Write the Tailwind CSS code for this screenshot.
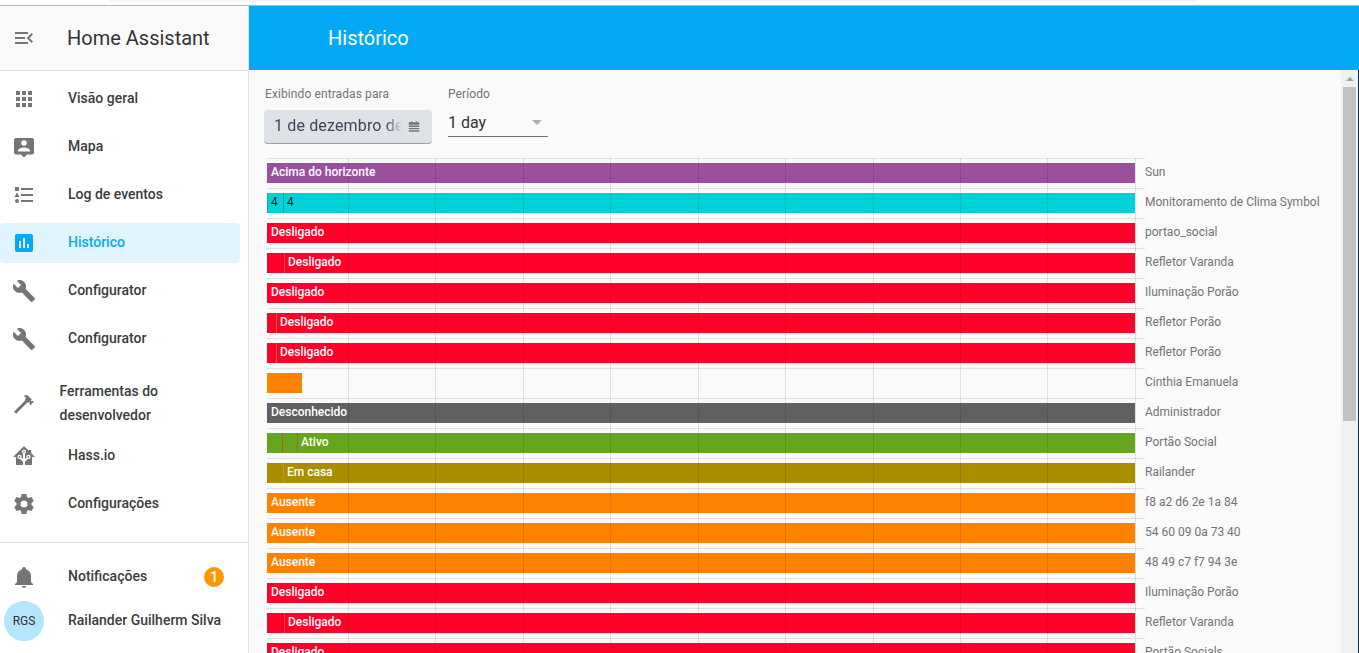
<!DOCTYPE html>
<html lang="en">
<head>
    <meta charset="UTF-8">
    <title>Histórico - Home Assistant</title>
    <script src="https://cdn.jsdelivr.net/npm/@tailwindcss/browser@4"></script>
</head>
<body class="h-[653px] w-[1359px] overflow-hidden bg-white font-['Roboto',sans-serif] flex flex-col">

    <!-- browser strip -->
    <div class="h-[6px] shrink-0 bg-white flex flex-col">
        <div class="h-[2px] ml-[110px] w-[1085px] bg-[#f5f5f5]"></div>
        <div class="mt-auto h-px flex">
            <div class="w-[249px] bg-[#b5b5b5]"></div>
            <div class="flex-1 bg-[#7cc8ea]"></div>
        </div>
    </div>

    <div class="flex flex-1 min-h-0">
        <!-- sidebar -->
        <aside class="w-[249px] shrink-0 bg-white border-r border-[#e0e0e0] flex flex-col text-[14px] font-medium text-[#3c3c3c]">
            <div class="h-[65px] shrink-0 bg-[#fafafa] border-b border-[#e0e0e0] flex items-center">
                <div class="w-[48px] flex justify-center">
                    <svg class="w-[24px] h-[24px] fill-[#757575]" viewBox="0 0 24 24"><path d="M21,15.61L19.59,17L14.58,12L19.59,7L21,8.39L17.44,12L21,15.61M3,6H16V8H3V6M3,13V11H13V13H3M3,18V16H16V18H3Z"/></svg>
                </div>
                <span class="ml-[19px] text-[20px] font-normal text-[#333]">Home Assistant</span>
            </div>

            <nav class="flex flex-col pt-[4px]">
                <a class="h-[48px] flex items-center">
                    <span class="w-[48px] flex justify-center"><svg class="w-[24px] h-[24px] fill-[#757575]" viewBox="0 0 24 24"><path d="M16,20H20V16H16M16,14H20V10H16M10,8H14V4H10M16,8H20V4H16M10,14H14V10H10M4,14H8V10H4M4,20H8V16H4M10,20H14V16H10M4,8H8V4H4V8Z"/></svg></span>
                    <span class="ml-[20px] mb-[2px]">Visão geral</span>
                </a>
                <a class="h-[48px] flex items-center">
                    <span class="w-[48px] flex justify-center"><svg class="w-[24px] h-[24px] fill-[#757575]" viewBox="0 0 24 24"><path fill-rule="evenodd" d="M20,3H4A2,2 0 0,0 2,5V17.5A2,2 0 0,0 4,19.5H9L12,22.5L15,19.5H20A2,2 0 0,0 22,17.5V5A2,2 0 0,0 20,3ZM12,5.2A2.8,2.8 0 0,1 14.8,8A2.8,2.8 0 0,1 12,10.8A2.8,2.8 0 0,1 9.2,8A2.8,2.8 0 0,1 12,5.2ZM6,16.5V15.5C6,13.5 10,12.4 12,12.4C14,12.4 18,13.5 18,15.5V16.5Z"/></svg></span>
                    <span class="ml-[20px] mb-[2px]">Mapa</span>
                </a>
                <a class="h-[48px] flex items-center">
                    <span class="w-[48px] flex justify-center"><svg class="w-[24px] h-[24px] fill-[#757575]" viewBox="0 0 24 24"><path d="M5,9.5L7.5,14H2.5L5,9.5M3,4H7V8H3V4M5,20A2,2 0 0,0 7,18A2,2 0 0,0 5,16A2,2 0 0,0 3,18A2,2 0 0,0 5,20M9,5V7H21V5H9M9,19H21V17H9V19M9,13H21V11H9V13Z"/></svg></span>
                    <span class="ml-[20px] mb-[2px]">Log de eventos</span>
                </a>
                <a class="h-[40px] my-[4px] w-[240px] flex items-center rounded-[4px] bg-[#e1f4fe] text-[#03a9f4]">
                    <span class="w-[48px] flex justify-center"><svg class="w-[24px] h-[24px] fill-[#03a9f4]" viewBox="0 0 24 24"><path d="M17,17H15V13H17M13,17H11V7H13M9,17H7V10H9M19,3H5C3.89,3 3,3.89 3,5V19A2,2 0 0,0 5,21H19A2,2 0 0,0 21,19V5C21,3.89 20.1,3 19,3Z"/></svg></span>
                    <span class="ml-[20px] mb-[2px]">Histórico</span>
                </a>
                <a class="h-[48px] flex items-center">
                    <span class="w-[48px] flex justify-center"><svg class="w-[24px] h-[24px] fill-[#757575]" viewBox="0 0 24 24"><path d="M22.7,19L13.6,9.9C14.5,7.6 14,4.9 12.1,3C10.1,1 7.1,0.6 4.7,1.7L9,6L6,9L1.6,4.7C0.4,7.1 0.9,10.1 2.9,12.1C4.8,14 7.5,14.5 9.8,13.6L18.9,22.7C19.3,23.1 19.9,23.1 20.3,22.7L22.6,20.4C23.1,20 23.1,19.3 22.7,19Z"/></svg></span>
                    <span class="ml-[20px] mb-[2px]">Configurator</span>
                </a>
                <a class="h-[48px] flex items-center">
                    <span class="w-[48px] flex justify-center"><svg class="w-[24px] h-[24px] fill-[#757575]" viewBox="0 0 24 24"><path d="M22.7,19L13.6,9.9C14.5,7.6 14,4.9 12.1,3C10.1,1 7.1,0.6 4.7,1.7L9,6L6,9L1.6,4.7C0.4,7.1 0.9,10.1 2.9,12.1C4.8,14 7.5,14.5 9.8,13.6L18.9,22.7C19.3,23.1 19.9,23.1 20.3,22.7L22.6,20.4C23.1,20 23.1,19.3 22.7,19Z"/></svg></span>
                    <span class="ml-[20px] mb-[2px]">Configurator</span>
                </a>
                <a class="h-[69px] pt-[12px] flex items-center">
                    <span class="w-[48px] flex justify-center"><svg class="w-[24px] h-[24px] fill-[#757575]" viewBox="0 0 24 24"><path d="M2,19.63L13.43,8.2L12.72,7.5L14.14,6.07L12,3.89C13.2,2.7 15.09,2.7 16.27,3.89L19.87,7.5L18.45,8.91H21.29L22,9.62L18.45,13.21L17.74,12.5V9.62L16.27,11.04L15.56,10.33L4.13,21.76L2,19.63Z"/></svg></span>
                    <span class="ml-[11.5px] mb-[2px] w-[150px] leading-[24px]">Ferramentas do desenvolvedor</span>
                </a>
                <a class="h-[48px] flex items-center">
                    <span class="w-[48px] flex justify-center"><svg class="w-[24px] h-[24px] fill-[#757575]" viewBox="0 0 24 24"><path d="M21.8,13H20V21H13V17.67L15.79,14.88L16.5,15C17.66,15 18.6,14.06 18.6,12.9C18.6,11.74 17.66,10.8 16.5,10.8A2.1,2.1 0 0,0 14.4,12.9L14.5,13.61L13,15.13V9.65C13.66,9.29 14.1,8.6 14.1,7.8A2.1,2.1 0 0,0 12,5.7A2.1,2.1 0 0,0 9.9,7.8C9.9,8.6 10.34,9.29 11,9.65V15.13L9.5,13.61L9.6,12.9A2.1,2.1 0 0,0 7.5,10.8A2.1,2.1 0 0,0 5.4,12.9A2.1,2.1 0 0,0 7.5,15L8.21,14.88L11,17.67V21H4V13H2.25C1.83,13 1.42,13 1.42,12.79C1.43,12.57 1.85,12.15 2.28,11.72L11,3C11.33,2.67 11.67,2.33 12,2.33C12.33,2.33 12.67,2.67 13,3L17,7V6H19V9L21.78,11.78C22.18,12.18 22.59,12.59 22.6,12.8C22.6,13 22.2,13 21.8,13M7.5,12A0.9,0.9 0 0,1 8.4,12.9A0.9,0.9 0 0,1 7.5,13.8A0.9,0.9 0 0,1 6.6,12.9A0.9,0.9 0 0,1 7.5,12M16.5,12C17,12 17.4,12.4 17.4,12.9C17.4,13.4 17,13.8 16.5,13.8A0.9,0.9 0 0,1 15.6,12.9A0.9,0.9 0 0,1 16.5,12M12,6.9C12.5,6.9 12.9,7.3 12.9,7.8C12.9,8.3 12.5,8.7 12,8.7C11.5,8.7 11.1,8.3 11.1,7.8C11.1,7.3 11.5,6.9 12,6.9Z"/></svg></span>
                    <span class="ml-[20px] mb-[2px]">Hass.io</span>
                </a>
                <a class="h-[48px] flex items-center">
                    <span class="w-[48px] flex justify-center"><svg class="w-[24px] h-[24px] fill-[#757575]" viewBox="0 0 24 24"><path d="M12,15.5A3.5,3.5 0 0,1 8.5,12A3.5,3.5 0 0,1 12,8.5A3.5,3.5 0 0,1 15.5,12A3.5,3.5 0 0,1 12,15.5M19.43,12.97C19.47,12.65 19.5,12.33 19.5,12C19.5,11.67 19.47,11.34 19.43,11L21.54,9.37C21.73,9.22 21.78,8.95 21.66,8.73L19.66,5.27C19.54,5.05 19.27,4.96 19.05,5.05L16.56,6.05C16.04,5.66 15.5,5.32 14.87,5.07L14.5,2.42C14.46,2.18 14.25,2 14,2H10C9.75,2 9.54,2.18 9.5,2.42L9.13,5.07C8.5,5.32 7.96,5.66 7.44,6.05L4.95,5.05C4.73,4.96 4.46,5.05 4.34,5.27L2.34,8.73C2.21,8.95 2.27,9.22 2.46,9.37L4.57,11C4.53,11.34 4.5,11.67 4.5,12C4.5,12.33 4.53,12.65 4.57,12.97L2.46,14.63C2.27,14.78 2.21,15.05 2.34,15.27L4.34,18.73C4.46,18.95 4.73,19.03 4.95,18.95L7.44,17.94C7.96,18.34 8.5,18.68 9.13,18.93L9.5,21.58C9.54,21.82 9.75,22 10,22H14C14.25,22 14.46,21.82 14.5,21.58L14.87,18.93C15.5,18.67 16.04,18.34 16.56,17.94L19.05,18.95C19.27,19.03 19.54,18.95 19.66,18.73L21.66,15.27C21.78,15.05 21.73,14.78 21.54,14.63L19.43,12.97Z"/></svg></span>
                    <span class="ml-[20px] mb-[2px]">Configurações</span>
                </a>
            </nav>

            <div class="mt-[14px] border-t border-[#e0e0e0] pt-[10px] flex flex-col">
                <a class="h-[48px] flex items-center">
                    <span class="w-[48px] flex justify-center"><svg class="w-[24px] h-[24px] fill-[#757575]" viewBox="0 0 24 24"><path d="M21,19V20H3V19L5,17V11C5,7.9 7.03,5.17 10,4.29C10,4.19 10,4.1 10,4A2,2 0 0,1 12,2A2,2 0 0,1 14,4C14,4.1 14,4.19 14,4.29C16.97,5.17 19,7.9 19,11V17L21,19M14,21A2,2 0 0,1 12,23A2,2 0 0,1 10,21"/></svg></span>
                    <span class="ml-[20px] mb-[2px]">Notificações</span>
                    <span class="ml-[57px] w-[20px] h-[20px] rounded-full bg-[#ff9800] text-white flex items-center justify-center text-[14px]">1</span>
                </a>
                <a class="h-[40px] flex items-center">
                    <span class="w-[48px] flex justify-center"><span class="w-[40px] h-[40px] rounded-full bg-[#b3e5fc] flex items-center justify-center text-[12px] font-normal text-[#333]">RGS</span></span>
                    <span class="ml-[20px] mb-[2px]">Railander Guilherm Silva</span>
                </a>
            </div>
        </aside>

        <!-- main -->
        <main class="flex-1 min-w-0 flex flex-col bg-[#fafafa]">
            <header class="h-[64px] shrink-0 bg-[#03a9f4] flex items-center pl-[79px] text-[20px] text-white">Histórico</header>

            <div class="flex-1 min-h-0 flex overflow-hidden">
                <div class="flex-1 min-w-0 pl-[15px]">
                    <!-- filters -->
                    <div class="flex h-[88px]">
                        <div class="w-[184px] pt-[16px]">
                            <div class="pl-px text-[12px] leading-[16px] tracking-[0.1px] text-[#737373]">Exibindo entradas para</div>
                            <div class="mt-[8px] w-[168px] h-[34px] rounded-[4px] bg-[#dee1e6] border-b border-[#9aa0a6] flex items-center pl-[10px] text-[16px] text-[#3c4858] tracking-[0.15px]">
                                <span class="mb-[2px] w-[128px] overflow-hidden whitespace-nowrap [mask-image:linear-gradient(to_right,black_112px,transparent)]">1 de dezembro de 2019</span>
                                <svg class="ml-[5px] w-[14px] h-[14px] fill-[#757575]" viewBox="0 0 24 24"><path d="M3,4H21V8H3Z M3,9.5H21V12H3Z M3,13.5H21V16H3Z M3,17.5H21V20H3Z M7,2H9V4H7Z M15,2H17V4H15Z"/></svg>
                            </div>
                        </div>
                        <div class="w-[100px] pt-[16px]">
                            <div class="text-[12px] leading-[16px] tracking-[0.1px] text-[#737373]">Período</div>
                            <div class="mt-[8px] h-[27px] pb-[1px] border-b border-[#737373] flex items-center justify-between text-[16px] text-[#333] pr-[6px]">
                                <span>1 day</span>
                                <span class="w-0 h-0 border-x-[5px] border-x-transparent border-t-[5px] border-t-[#b0b0b0]"></span>
                            </div>
                        </div>
                    </div>

                    <!-- timeline chart -->
                    <div id="chart" class="relative ml-[3px] w-[878px] text-[12px] font-medium">
                        <div class="relative z-0 flex flex-col border-t border-[#e0e0e0]">
                            <div class="h-[30px] border-b border-[#e0e0e0] flex items-center"><div class="shrink-0 w-[868px] h-[20px] mt-[-1px] pl-[4px] bg-[#9b4f9f] text-white flex items-start leading-[18px]">Acima do horizonte</div><span class="ml-[10px] mb-[4px] whitespace-nowrap font-normal text-[#737373]">Sun</span></div>
                            <div class="h-[30px] border-b border-[#e0e0e0] flex items-center"><div class="shrink-0 w-[868px] h-[20px] mt-[-1px] bg-[#00d2d5] text-[#212121] font-normal flex items-start leading-[18px]"><span class="w-[16px] h-full pl-[3px] border-l border-[#2f9ba0]">4</span><span class="h-full pl-[3px] border-l border-[#2f9ba0]">4</span></div><span class="ml-[10px] mb-[4px] whitespace-nowrap font-normal text-[#737373]">Monitoramento de Clima Symbol</span></div>
                            <div class="h-[30px] border-b border-[#e0e0e0] flex items-center"><div class="shrink-0 w-[868px] h-[20px] mt-[-1px] pl-[4px] bg-[#ff0029] text-white flex items-start leading-[18px]">Desligado</div><span class="ml-[10px] mb-[4px] whitespace-nowrap font-normal text-[#737373]">portao_social</span></div>
                            <div class="h-[30px] border-b border-[#e0e0e0] flex items-center"><div class="shrink-0 w-[868px] h-[20px] mt-[-1px] bg-[#ff0029] text-white flex items-start leading-[18px]"><span class="w-[18px] h-full border-r border-[#c9503a]"></span><span class="pl-[3px]">Desligado</span></div><span class="ml-[10px] mb-[4px] whitespace-nowrap font-normal text-[#737373]">Refletor Varanda</span></div>
                            <div class="h-[30px] border-b border-[#e0e0e0] flex items-center"><div class="shrink-0 w-[868px] h-[20px] mt-[-1px] pl-[4px] bg-[#ff0029] text-white flex items-start leading-[18px]">Desligado</div><span class="ml-[10px] mb-[4px] whitespace-nowrap font-normal text-[#737373]">Iluminação Porão</span></div>
                            <div class="h-[30px] border-b border-[#e0e0e0] flex items-center"><div class="shrink-0 w-[868px] h-[20px] mt-[-1px] bg-[#ff0029] text-white flex items-start leading-[18px]"><span class="w-[10px] h-full border-r border-[#a8761f]"></span><span class="pl-[3px]">Desligado</span></div><span class="ml-[10px] mb-[4px] whitespace-nowrap font-normal text-[#737373]">Refletor Porão</span></div>
                            <div class="h-[30px] border-b border-[#e0e0e0] flex items-center"><div class="shrink-0 w-[868px] h-[20px] mt-[-1px] bg-[#ff0029] text-white flex items-start leading-[18px]"><span class="w-[10px] h-full border-r border-[#a8761f]"></span><span class="pl-[3px]">Desligado</span></div><span class="ml-[10px] mb-[4px] whitespace-nowrap font-normal text-[#737373]">Refletor Porão</span></div>
                            <div class="h-[30px] border-b border-[#e0e0e0] flex items-center"><div class="shrink-0 w-[868px] h-[20px] mt-[-1px] flex items-start"><span class="w-[35px] h-full bg-[#ff8100]"></span></div><span class="ml-[10px] mb-[4px] whitespace-nowrap font-normal text-[#737373]">Cinthia Emanuela</span></div>
                            <div class="h-[30px] border-b border-[#e0e0e0] flex items-center"><div class="shrink-0 w-[868px] h-[20px] mt-[-1px] pl-[4px] bg-[#606060] text-white flex items-start leading-[18px]">Desconhecido</div><span class="ml-[10px] mb-[4px] whitespace-nowrap font-normal text-[#737373]">Administrador</span></div>
                            <div class="h-[30px] border-b border-[#e0e0e0] flex items-center"><div class="shrink-0 w-[868px] h-[20px] mt-[-1px] bg-[#66a61e] text-white flex items-start leading-[18px]"><span class="w-[16px] h-full border-r border-[#c0572c]"></span><span class="w-[15px] h-full border-r border-[#a8662c]"></span><span class="pl-[3px]">Ativo</span></div><span class="ml-[10px] mb-[4px] whitespace-nowrap font-normal text-[#737373]">Portão Social</span></div>
                            <div class="h-[30px] border-b border-[#e0e0e0] flex items-center"><div class="shrink-0 w-[868px] h-[20px] mt-[-1px] bg-[#a98e00] text-white flex items-start leading-[18px]"><span class="w-[17px] h-full border-r border-[#d69010]"></span><span class="pl-[3px]">Em casa</span></div><span class="ml-[10px] mb-[4px] whitespace-nowrap font-normal text-[#737373]">Railander</span></div>
                            <div class="h-[30px] border-b border-[#e0e0e0] flex items-center"><div class="shrink-0 w-[868px] h-[20px] mt-[-1px] pl-[4px] bg-[#ff8100] text-white flex items-start leading-[18px]">Ausente</div><span class="ml-[10px] mb-[4px] whitespace-nowrap font-normal text-[#737373]">f8 a2 d6 2e 1a 84</span></div>
                            <div class="h-[30px] border-b border-[#e0e0e0] flex items-center"><div class="shrink-0 w-[868px] h-[20px] mt-[-1px] pl-[4px] bg-[#ff8100] text-white flex items-start leading-[18px]">Ausente</div><span class="ml-[10px] mb-[4px] whitespace-nowrap font-normal text-[#737373]">54 60 09 0a 73 40</span></div>
                            <div class="h-[30px] border-b border-[#e0e0e0] flex items-center"><div class="shrink-0 w-[868px] h-[20px] mt-[-1px] pl-[4px] bg-[#ff8100] text-white flex items-start leading-[18px]">Ausente</div><span class="ml-[10px] mb-[4px] whitespace-nowrap font-normal text-[#737373]">48 49 c7 f7 94 3e</span></div>
                            <div class="h-[30px] border-b border-[#e0e0e0] flex items-center"><div class="shrink-0 w-[868px] h-[20px] mt-[-1px] pl-[4px] bg-[#ff0029] text-white flex items-start leading-[18px]">Desligado</div><span class="ml-[10px] mb-[4px] whitespace-nowrap font-normal text-[#737373]">Iluminação Porão</span></div>
                            <div class="h-[30px] border-b border-[#e0e0e0] flex items-center"><div class="shrink-0 w-[868px] h-[20px] mt-[-1px] bg-[#ff0029] text-white flex items-start leading-[18px]"><span class="w-[18px] h-full border-r border-[#c9503a]"></span><span class="pl-[3px]">Desligado</span></div><span class="ml-[10px] mb-[4px] whitespace-nowrap font-normal text-[#737373]">Refletor Varanda</span></div>
                            <div class="h-[30px] border-b border-[#e0e0e0] flex items-center"><div class="shrink-0 w-[868px] h-[20px] mt-[-1px] pl-[4px] bg-[#ff0029] text-white flex items-start leading-[18px]">Desligado</div><span class="ml-[10px] mb-[4px] whitespace-nowrap font-normal text-[#737373]">Portão Socials</span></div>
                        </div>
                        <!-- vertical gridlines sit over the bars -->
                        <div class="absolute inset-y-0 left-0 w-[868px] pointer-events-none">
                            <i class="absolute inset-y-0 left-[81px] w-px bg-black/10"></i>
                            <i class="absolute inset-y-0 left-[168px] w-px bg-black/10"></i>
                            <i class="absolute inset-y-0 left-[256px] w-px bg-black/10"></i>
                            <i class="absolute inset-y-0 left-[343px] w-px bg-black/10"></i>
                            <i class="absolute inset-y-0 left-[431px] w-px bg-black/10"></i>
                            <i class="absolute inset-y-0 left-[518px] w-px bg-black/10"></i>
                            <i class="absolute inset-y-0 left-[606px] w-px bg-black/10"></i>
                            <i class="absolute inset-y-0 left-[693px] w-px bg-black/10"></i>
                            <i class="absolute inset-y-0 left-[780px] w-px bg-black/10"></i>
                            <i class="absolute inset-y-0 left-[868px] w-px bg-black/10"></i>
                        </div>
                    </div>
                </div>

                <!-- scrollbar -->
                <div class="w-[18px] shrink-0 bg-[#f1f1f1] flex flex-col items-center border-r border-[#0d2b4a]">
                    <span class="mt-[7px] w-0 h-0 border-x-[4px] border-x-transparent border-b-[4px] border-b-[#a3a3a3]"></span>
                    <div class="mt-[6px] self-start ml-[2px] w-[13px] h-[334px] bg-[#c1c1c1]"></div>
                </div>
            </div>
        </main>
    </div>
</body>
</html>
